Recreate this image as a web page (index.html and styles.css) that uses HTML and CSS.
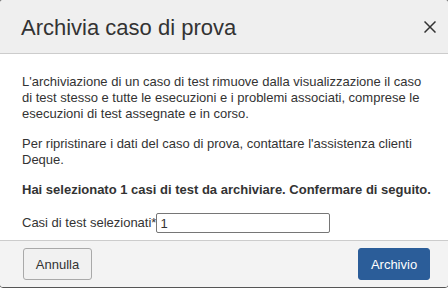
FILE: index.html
```html
<!DOCTYPE html>
<html lang="it">
<head>
  <meta charset="UTF-8">
  <title>Archivia caso di prova</title>
  <meta name="viewport" content="width=device-width, initial-scale=1.0">
  <link rel="stylesheet" href="styles.css">
</head>
<body>
  <div class="dialog">
    <div class="dialog-header">
      <h2>Archivia caso di prova</h2>
      <button class="close" aria-label="Chiudi">
        <svg width="12" height="12" viewBox="0 0 12 12">
          <path d="M0.5 0.5 L11.5 11.5 M11.5 0.5 L0.5 11.5" stroke="#333" stroke-width="1.5" fill="none"/>
        </svg>
      </button>
    </div>

    <div class="dialog-body">
      <p>L'archiviazione di un caso di test rimuove dalla visualizzazione il caso di test stesso e tutte le esecuzioni e i problemi associati, comprese le esecuzioni di test assegnate e in corso.</p>
      <p>Per ripristinare i dati del caso di prova, contattare l'assistenza clienti Deque.</p>
      <p class="confirm">Hai selezionato 1 casi di test da archiviare. Confermare di seguito.</p>
      <div class="field">
        <label for="count">Casi di test selezionati*</label>
        <input type="text" id="count" value="1">
      </div>
    </div>

    <div class="dialog-footer">
      <button class="button secondary">Annulla</button>
      <button class="button primary">Archivio</button>
    </div>
  </div>
</body>
</html>
```

FILE: styles.css
```css
body {
  margin: 0;
  font-family: 'Liberation Sans', Arial, sans-serif;
  color: #333;
  background: #fff;
  overflow: hidden;
}

.dialog {
  margin: -1px -1px 0 -1px;
  border: 1px solid #555;
  border-radius: 4px;
  overflow: hidden;
  background: #fff;
}

.dialog-header {
  height: 53px;
  display: flex;
  align-items: center;
  justify-content: space-between;
  padding: 0 12px 0 21px;
  background: #efefef;
  border-bottom: 1px solid #ccc;
}

.dialog-header h2 {
  margin: 2px 0 0 0;
  font-size: 22px;
  font-weight: normal;
  color: #333;
}

.close {
  border: none;
  background: none;
  padding: 0;
  width: 12px;
  height: 12px;
  cursor: pointer;
}

.close svg {
  display: block;
}

.dialog-body {
  padding: 20px 18px 7px 22px;
  font-size: 13px;
  line-height: 16px;
}

.dialog-body p {
  margin: 0 0 14px 0;
}

.dialog-body p.confirm {
  font-weight: bold;
  white-space: nowrap;
  margin-bottom: 15px;
}

.field {
  display: flex;
  align-items: center;
}

.field input {
  width: 166px;
  height: 18px;
  padding: 0 3px;
  border: 1px solid #767676;
  border-radius: 2px;
  font-family: 'Liberation Sans', Arial, sans-serif;
  font-size: 13px;
  color: #333;
}

.dialog-footer {
  display: flex;
  justify-content: space-between;
  align-items: center;
  padding: 7px 18px 7px 23px;
  background: #f3f3f3;
  border-top: 1px solid #ccc;
}

.button {
  height: 32px;
  border-radius: 3px;
  font-family: 'Liberation Sans', Arial, sans-serif;
  font-size: 13px;
  cursor: pointer;
}

.secondary {
  width: 69px;
  background: #f1f1f1;
  border: 1px solid #a9a9a9;
  color: #333;
}

.primary {
  width: 72px;
  background: #2b5d99;
  border: 1px solid #2b5d99;
  color: #fff;
}
```
